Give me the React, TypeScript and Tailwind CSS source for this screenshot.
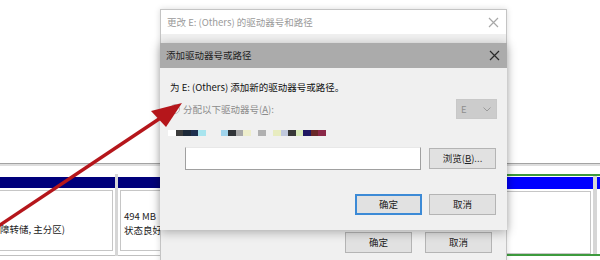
import type { ReactNode } from "react";

const cjk = "font-['Noto_Sans_CJK_SC','Microsoft_YaHei',sans-serif]";

// colour dots in the blurred line under the radio row
const strip = [
  "#ffffff", "#3c3c3c", "#1c2838", "#1e3050", "#a8e4ee", "#f0f0f0",
  "#f0f0f0", "#a0d4ec", "#303438", "#a8a8a8", "#eeeecc", "#f0f0f0",
  "#b0b0b0", "#f0f0f0", "#e8ecc0", "#c0c8dc", "#383838", "#d8eab8",
  "#201860", "#6a2828", "#8a2848",
];

function WinButton({
  children,
  primary,
  className = "",
}: {
  children: ReactNode;
  primary?: boolean;
  className?: string;
}) {
  return (
    <div
      className={`flex items-center justify-center bg-[#e1e1e1] text-[9.5px] text-[#222] ${
        primary
          ? "border-2 border-[#3c8ad6]"
          : "border border-[#b4b4b4]"
      } ${className}`}
    >
      {children}
    </div>
  );
}

function CloseX({ color }: { color: string }) {
  return (
    <svg width="11" height="11" viewBox="0 0 11 11">
      <path d="M1 1L10 10M10 1L1 10" stroke={color} strokeWidth="1.2" />
    </svg>
  );
}

export default function App() {
  return (
    <div className={`relative h-[260px] w-[600px] overflow-hidden bg-white ${cjk}`}>

      {/* DISK MANAGEMENT BEHIND */}
      <div className="flex flex-col pt-[163px]">
        <div className="h-[3px] border-t border-[#a3a3a3] bg-[#dedede]" />
        <div className="h-[8px]" />

        <div className="flex h-[82px] bg-[#d6d6d6]">

          {/* PARTITION A */}
          <div className="flex w-[115px] flex-col bg-white pt-[3px]">
            <div className="h-[11px] bg-[#00007b]" />
            <div className="mt-[2px] mr-[2px] flex h-[61px] items-end border border-l-0 border-[#c6c6c6] pb-[16px]">
              <span className="text-[9.5px] leading-none text-[#222]">障转储, 主分区)</span>
            </div>
            <div className="mt-auto h-[1px] bg-[#c0c0c0]" />
          </div>

          <div className="w-[3px]" />

          {/* PARTITION B */}
          <div className="flex w-[182px] flex-col bg-white pt-[3px]">
            <div className="h-[11px] bg-[#00007b]" />
            <div className="mx-[2px] mt-[2px] flex h-[61px] flex-col border border-[#c6c6c6] px-[3px] pt-[18px] text-[9.5px] leading-[14px] text-[#222]">
              <span>494 MB</span>
              <span>状态良好</span>
            </div>
            <div className="mt-auto h-[1px] bg-[#c0c0c0]" />
          </div>

          {/* PARTITION C + D, SELECTED */}
          <div className="flex flex-1 border-y-2 border-[#3d9a3d] bg-white">
            <div className="flex flex-1 flex-col pt-[1px]">
              <div className="h-[12px] bg-[#0000ff]" />
              <div className="mt-[2px] mr-[2px] h-[63px] border border-[#c6c6c6]" />
            </div>
            <div className="w-[4px] bg-[#d6d6d6]" />
            <div className="flex w-[3px] flex-col pt-[1px]">
              <div className="h-[12px] bg-[#0000ff]" />
            </div>
          </div>
        </div>
      </div>

      {/* OUTER DIALOG */}
      <div className="absolute left-[160px] top-[9px] flex h-[260px] w-[347px] flex-col border border-[#c4c4c4] bg-[#f0f0f0] shadow-[0_0_6px_rgba(0,0,0,0.15)]">
        <div className="flex h-[24px] items-center justify-between bg-white pl-[6px] pr-[7px]">
          <span className="text-[9.5px] text-[#9a9a9a]">更改 E: (Others) 的驱动器号和路径</span>
          <CloseX color="#a8a8a8" />
        </div>
        <div className="flex justify-end gap-[13px] pr-[14px] pt-[198px]">
          <WinButton className="h-[21px] w-[67px]">确定</WinButton>
          <WinButton className="h-[21px] w-[67px]">取消</WinButton>
        </div>
      </div>

      {/* INNER DIALOG */}
      <div className="absolute left-[160px] top-[43px] flex h-[187px] w-[347px] flex-col bg-[#f0f0f0] shadow-[0_2px_10px_rgba(0,0,0,0.3)]">
        <div className="flex h-[25px] items-center justify-between bg-[#ababab] pl-[6px] pr-[7px]">
          <span className="text-[9.5px] text-[#1e1e1e]">添加驱动器号或路径</span>
          <CloseX color="#2a2a2a" />
        </div>

        <div className="flex flex-col pl-[10px] pr-[10px] pt-[11px]">
          <p className="h-[16px] text-[9.5px] leading-[16px] text-[#111]">
            为 E: (Others) 添加新的驱动器号或路径。
          </p>

          <div className="mt-[4px] flex h-[20px] items-center justify-between">
            <div className="flex items-center gap-[3px]">
              <div className="h-[10px] w-[10px] rounded-full border border-[#b8b8b8] bg-[#f4f4f4]" />
              <span className="text-[9.5px] text-[#8c8c8c]">
                分配以下驱动器号(<span className="underline">A</span>):
              </span>
            </div>
            <div className="flex h-[20px] w-[41px] items-center justify-between border border-[#c8c8c8] bg-[#cccccc] pl-[4px] pr-[5px]">
              <span className="text-[9.5px] text-[#8e8e8e]">E</span>
              <svg width="8" height="5" viewBox="0 0 8 5">
                <path d="M0.5 0.5L4 4L7.5 0.5" fill="none" stroke="#9a9a9a" strokeWidth="1" />
              </svg>
            </div>
          </div>

          <div className="-ml-[2px] mt-[11px] flex h-[6px]">
            {strip.map((c, i) => (
              <div key={i} className="h-[6px] w-[7.5px]" style={{ backgroundColor: c }} />
            ))}
          </div>

          <div className="mt-[11px] flex items-center pl-[15px]">
            <div className="h-[23px] w-[236px] border border-[#a0a0a0] border-t-[#e8e8e8] bg-white" />
            <WinButton className="ml-[8px] h-[21px] w-[67px]">
              浏览(<span className="underline">B</span>)...
            </WinButton>
          </div>

          <div className="mt-[24px] flex justify-end gap-[7px] pr-[1px]">
            <WinButton primary className="h-[21px] w-[67px]">确定</WinButton>
            <WinButton className="h-[21px] w-[67px]">取消</WinButton>
          </div>
        </div>
      </div>

      {/* RED ARROW */}
      <svg className="pointer-events-none absolute inset-0" width="600" height="260" viewBox="0 0 600 260">
        <line x1="-6" y1="229" x2="162" y2="117" stroke="#b5161b" strokeWidth="3.5" />
        <polygon points="182,103 151,111 166,127" fill="#b5161b" />
      </svg>
    </div>
  );
}
